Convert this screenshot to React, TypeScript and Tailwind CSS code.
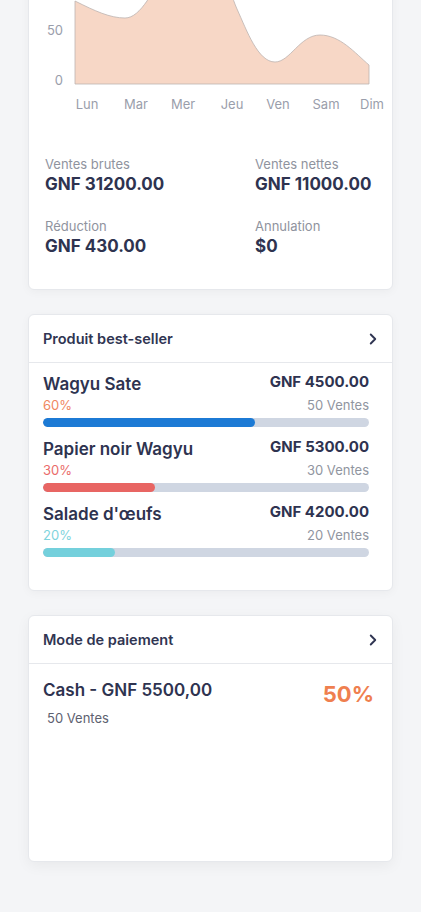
import { ChevronRight } from 'lucide-react';

const days = [
  { label: 'Lun', x: 87 },
  { label: 'Mar', x: 136 },
  { label: 'Mer', x: 183 },
  { label: 'Jeu', x: 232 },
  { label: 'Ven', x: 278 },
  { label: 'Sam', x: 326 },
  { label: 'Dim', x: 372 },
];

const stats = [
  { label: 'Ventes brutes', value: 'GNF 31200.00' },
  { label: 'Ventes nettes', value: 'GNF 11000.00' },
  { label: 'Réduction', value: 'GNF 430.00' },
  { label: 'Annulation', value: '$0' },
];

const products = [
  { name: 'Wagyu Sate', price: 'GNF 4500.00', pct: '60%', sales: '50 Ventes', fill: '65%', text: 'text-[#f0875f]', bar: 'bg-[#1c7ad5]' },
  { name: 'Papier noir Wagyu', price: 'GNF 5300.00', pct: '30%', sales: '30 Ventes', fill: '34.5%', text: 'text-[#ea6c6a]', bar: 'bg-[#e86563]' },
  { name: "Salade d'œufs", price: 'GNF 4200.00', pct: '20%', sales: '20 Ventes', fill: '22%', text: 'text-[#7ed4dd]', bar: 'bg-[#74d0dc]' },
];

function SalesChart() {
  // viewBox uses page coordinates so the curve is easy to tune
  return (
    <svg width="363" height="225" viewBox="29 -110 363 225" className="block">
      <path
        d="M75,0 C95,10 110,17 125,17 C133,17 140,10 147,0 C165,-30 180,-55 200,-55 C220,-55 228,-12 237,8 C247,30 258,61 275,61 C290,61 300,34 320,34 C340,34 355,52 369,64 L369,83 L75,83 Z"
        fill="#f7d7c6"
        stroke="#bdb4b1"
        strokeWidth="0.8"
      />
      <g fontFamily="Inter, 'Noto Sans', sans-serif" fontSize="13" fill="#9a9eab">
        <text x="63" y="34" textAnchor="end">50</text>
        <text x="63" y="84" textAnchor="end">0</text>
        {days.map((d) => (
          <text key={d.label} x={d.x} y="108" textAnchor="middle">{d.label}</text>
        ))}
      </g>
    </svg>
  );
}

function CardHeader({ title }: { title: string }) {
  return (
    <div className="flex h-12 items-center justify-between border-b border-[#e6e8ec] pl-[14px] pr-[10px]">
      <span className="text-[14.5px] font-semibold text-[#303552]">{title}</span>
      <ChevronRight className="h-[18px] w-[18px] text-[#303552]" strokeWidth={2.5} />
    </div>
  );
}

export default function App() {
  return (
    <main className="min-h-screen overflow-hidden bg-[#f4f5f7] px-[28px] pb-10 font-['Inter','Noto_Sans',sans-serif]">
      <div className="flex flex-col gap-6">
        {/* Sales chart */}
        <section className="-mt-[129px] rounded-md border border-[#e6e8ec] bg-white pt-[19px] pb-[32px] shadow-[0_2px_10px_rgba(0,0,0,0.04)]">
          <SalesChart />
          <div className="mt-[39px] grid grid-cols-[210px_1fr] gap-y-[22px] pl-[16px]">
            {stats.map((s) => (
              <div key={s.label} className="flex flex-col">
                <span className="text-[13px] leading-[18px] text-[#8f939e]">{s.label}</span>
                <span className="text-[17px] font-bold leading-[22px] text-[#2e3350]">{s.value}</span>
              </div>
            ))}
          </div>
        </section>

        {/* Best sellers */}
        <section className="rounded-md border border-[#e6e8ec] bg-white pb-[33px] shadow-[0_2px_10px_rgba(0,0,0,0.04)]">
          <CardHeader title="Produit best-seller" />
          <div className="flex flex-col gap-[10px] pt-[9px] pl-[14px] pr-[23px]">
            {products.map((p) => (
              <div key={p.name} className="flex flex-col">
                <div className="flex items-start justify-between">
                  <span className="text-[17px] font-semibold leading-[24px] text-[#2e3350]">{p.name}</span>
                  <span className="text-[15px] font-bold leading-[20px] text-[#2e3350]">{p.price}</span>
                </div>
                <div className="flex items-center justify-between text-[13px] leading-[18px]">
                  <span className={p.text}>{p.pct}</span>
                  <span className="text-[#9095a0]">{p.sales}</span>
                </div>
                <div className="mt-[4px] h-[9px] w-full overflow-hidden rounded-full bg-[#cfd6e2]">
                  <div className={`h-full rounded-full ${p.bar}`} style={{ width: p.fill }} />
                </div>
              </div>
            ))}
          </div>
        </section>

        {/* Payment methods */}
        <section className="h-[247px] rounded-md border border-[#e6e8ec] bg-white shadow-[0_4px_14px_rgba(0,0,0,0.05)]">
          <CardHeader title="Mode de paiement" />
          <div className="flex items-start justify-between pt-[14px] pl-[14px] pr-[18px]">
            <div className="flex flex-col">
              <span className="text-[17px] font-semibold leading-[24px] text-[#2e3350]">Cash - GNF 5500,00</span>
              <span className="mt-[7px] pl-[4px] text-[13px] leading-[18px] text-[#5d6170]">50 Ventes</span>
            </div>
            <span className="mt-[2px] text-[22px] font-bold leading-[28px] text-[#ef7f4f]">50%</span>
          </div>
        </section>
      </div>
    </main>
  );
}
